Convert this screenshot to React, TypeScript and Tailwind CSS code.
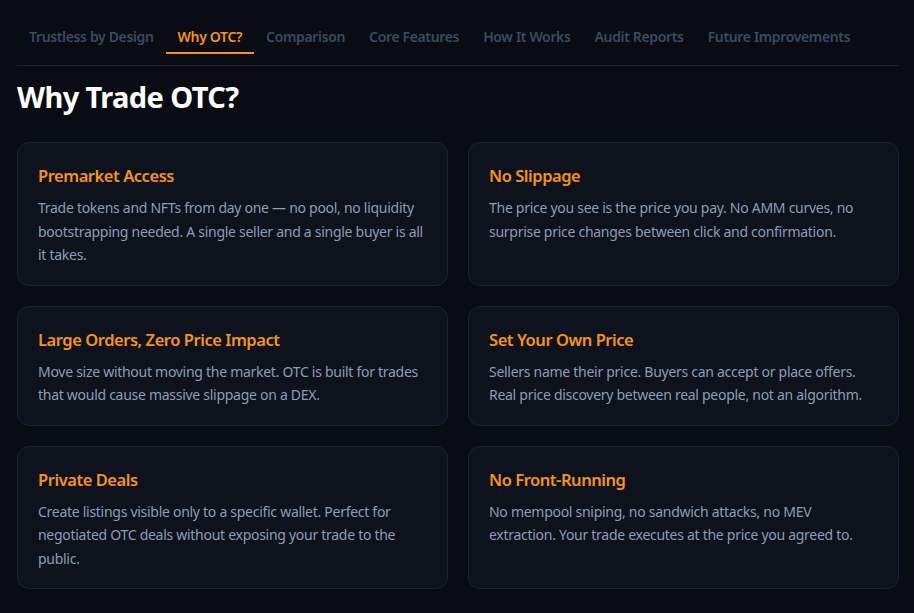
import React from "react";

const tabs = [
  "Trustless by Design",
  "Why OTC?",
  "Comparison",
  "Core Features",
  "How It Works",
  "Audit Reports",
  "Future Improvements",
];

const cards = [
  {
    title: "Premarket Access",
    body: "Trade tokens and NFTs from day one — no pool, no liquidity bootstrapping needed. A single seller and a single buyer is all it takes.",
  },
  {
    title: "No Slippage",
    body: "The price you see is the price you pay. No AMM curves, no surprise price changes between click and confirmation.",
  },
  {
    title: "Large Orders, Zero Price Impact",
    body: "Move size without moving the market. OTC is built for trades that would cause massive slippage on a DEX.",
  },
  {
    title: "Set Your Own Price",
    body: "Sellers name their price. Buyers can accept or place offers. Real price discovery between real people, not an algorithm.",
  },
  {
    title: "Private Deals",
    body: "Create listings visible only to a specific wallet. Perfect for negotiated OTC deals without exposing your trade to the public.",
  },
  {
    title: "No Front-Running",
    body: "No mempool sniping, no sandwich attacks, no MEV extraction. Your trade executes at the price you agreed to.",
  },
];

export default function App() {
  return (
    <div
      className="min-h-[613px] w-full bg-[#090c13] pl-[17px] pr-[15px] pt-5 pb-6"
      style={{ fontFamily: '"Noto Sans", "Open Sans", sans-serif' }}
    >
      <div className="flex border-b border-[#1b212d] pb-[11px]">
        {tabs.map((t) => {
          const active = t === "Why OTC?";
          return (
            <div
              key={t}
              className={
                active
                  ? "px-3 pt-[7px] pb-[5px] border-b-2 border-[#f7931a] text-[14px] leading-5 font-semibold tracking-[-0.35px] text-[#f7931a]"
                  : "px-3 pt-[7px] pb-[5px] border-b-2 border-transparent text-[14px] leading-5 font-semibold tracking-[-0.35px] text-[#3b4a62]"
              }
            >
              {t}
            </div>
          );
        })}
      </div>
      <h2 className="mt-[13px] mb-[27px] text-[29px] leading-9 font-bold tracking-[-0.6px] text-white">
        Why Trade OTC?
      </h2>
      <div className="grid grid-cols-2 gap-5">
        {cards.map((c) => (
          <div
            key={c.title}
            className="rounded-xl border border-[#1a2335] bg-[#0d121d] px-5 pt-5 pb-[18px]"
          >
            <h3 className="mb-[7px] text-[16.5px] leading-[26px] font-semibold tracking-[-0.45px] text-[#f7931a]">
              {c.title}
            </h3>
            <p className="text-[14px] leading-[23.5px] tracking-[-0.28px] text-[#8d9db5]">{c.body}</p>
          </div>
        ))}
      </div>
    </div>
  );
}
